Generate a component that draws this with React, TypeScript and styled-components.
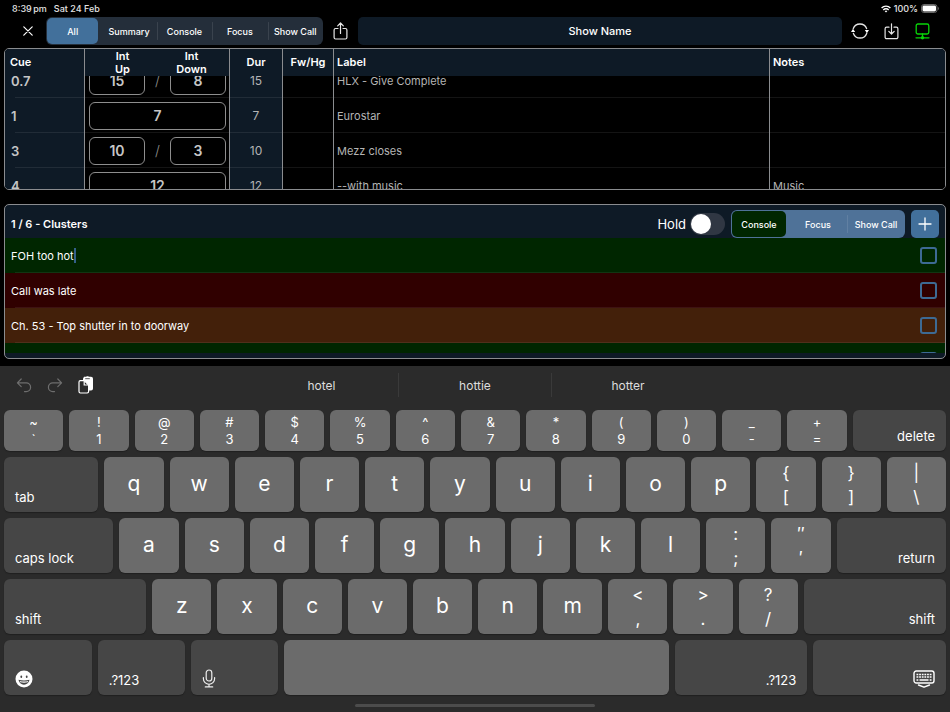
import React, { useLayoutEffect, useRef, useState } from "react";
import styled, { createGlobalStyle, css } from "styled-components";

const navy = "#0e1a26";
const blue = "#42709b";
const line = "#8a8c8f";

const GlobalStyle = createGlobalStyle`
  * { box-sizing: border-box; }
  body {
    margin: 0;
    background: #000;
    color: #fff;
    font-family: Inter, "Liberation Sans", sans-serif;
    font-size: 11px;
  }
  button, input { font: inherit; color: inherit; margin: 0; padding: 0; border: 0; background: none; }
  svg { display: block; flex: none; }
`;

const Page = styled.div`
  min-height: 100vh;
  display: flex;
  flex-direction: column;
  overflow: hidden;
`;

const StatusBar = styled.header`
  display: flex;
  align-items: center;
  height: 17px;
  padding: 0 11px 0 12px;
  gap: 7px;
  font-size: 9px;
  font-weight: 500;
  color: #e4e4e4;
`;

const StatusRight = styled.div`
  margin-left: auto;
  display: flex;
  align-items: center;
  gap: 3px;
`;

const Toolbar = styled.nav`
  display: flex;
  align-items: center;
  height: 28px;
  padding: 0 17px;
`;

const IconButton = styled.button`
  width: 22px;
  height: 28px;
  display: grid;
  place-items: center;
  flex: none;
`;

const ToolGroup = styled.div`
  display: flex;
  gap: 9px;
`;

const Segments = styled.div<{ $tone: "dark" | "light" }>`
  display: grid;
  grid-auto-flow: column;
  grid-auto-columns: 1fr;
  flex: none;
  height: 28px;
  padding: 1px 0;
  border-radius: 6px;
  ${(p) =>
    p.$tone === "dark"
      ? css`
          width: 277px;
          margin: 0 6px 0 7px;
          background: #242e3a;
        `
      : css`
          width: 174px;
          background: #4f7298;
        `}
`;

const Segment = styled.button<{ $on: boolean; $fill: string; $rule: boolean }>`
  border-radius: 5px;
  font-size: 9px;
  font-weight: 500;
  white-space: nowrap;
  background-color: ${(p) => (p.$on ? p.$fill : "transparent")};
  ${(p) => p.$on && css`margin: 0 3px 0 1px;`}
  ${(p) =>
    p.$rule &&
    css`
      background-image: linear-gradient(rgba(255, 255, 255, 0.1), rgba(255, 255, 255, 0.1));
      background-size: 1px 18px;
      background-repeat: no-repeat;
      background-position: left center;
    `}
`;

const ShowName = styled.input`
  flex: 1;
  min-width: 0;
  height: 28px;
  margin: 0 7px;
  border-radius: 5px;
  background: ${navy};
  text-align: center;
  font-weight: 500;
`;

const Panel = styled.section`
  margin: 3px 4px 0;
  border: 1px solid ${line};
  border-radius: 5px;
  overflow: hidden;
`;

const CueScroll = styled.div`
  height: 140px;
  overflow-y: auto;
  scrollbar-width: none;
`;

const CueTable = styled.table`
  width: 100%;
  table-layout: fixed;
  border-collapse: separate;
  border-spacing: 0;
  thead { position: sticky; top: 0; z-index: 1; }
`;

const Col = styled.col<{ $w?: number }>`
  width: ${(p) => (p.$w ? `${p.$w}px` : "auto")};
`;

const Head = styled.th<{ $align?: string }>`
  height: 27px;
  padding: 0 3px;
  background: ${navy};
  border-right: 1px solid ${line};
  text-align: ${(p) => p.$align ?? "left"};
  line-height: 13px;
  font-weight: 600;
  &:first-child { padding-left: 5px; }
  &:last-child { border-right: 0; }
`;

const IntHead = styled.div`
  display: grid;
  grid-template-columns: 1fr 1fr;
  text-align: center;
`;

const Cell = styled.td<{ $kind?: "cue" | "dur" }>`
  height: 35px;
  padding: 0 3px;
  border-right: 1px solid ${line};
  color: #b4b4b4;
  background-color: ${(p) => (p.$kind ? navy : "#000")};
  background-image: linear-gradient(rgba(255, 255, 255, 0.08), rgba(255, 255, 255, 0.08));
  background-repeat: no-repeat;
  background-position: right bottom;
  background-size: ${(p) => (p.$kind === "cue" ? "calc(100% - 10px)" : "100%")} 1px;
  ${(p) => p.$kind === "cue" && css`padding-left: 6px; font-size: 13px; font-weight: 600; color: #c6c6c6;`}
  ${(p) => p.$kind === "dur" && css`text-align: center; font-size: 12px;`}
  &:last-child { border-right: 0; }
`;

const Times = styled.div`
  display: flex;
  align-items: center;
  justify-content: space-between;
  padding-left: 1px;
  font-size: 14px;
`;

const Slash = styled.span`
  font-weight: 300;
  color: #909090;
`;

const TimeInput = styled.input<{ $full?: boolean }>`
  width: ${(p) => (p.$full ? "100%" : "56px")};
  height: 28px;
  border: 1px solid #8e8e8e;
  border-radius: 6px;
  text-align: center;
  font-weight: 600;
  color: #c6c6c6;
`;

const NotesPanel = styled(Panel)`
  margin-top: 14px;
  padding-bottom: 5px;
  background: ${navy};
`;

const NotesHead = styled.div`
  display: flex;
  align-items: flex-end;
  height: 33px;
  padding: 0 6px;
`;

const NotesTitle = styled.h2`
  flex: 1;
  margin: 0;
  font-size: 11px;
  line-height: 27px;
  font-weight: 600;
`;

const Hold = styled.label`
  display: flex;
  align-items: center;
  gap: 4px;
  height: 28px;
  margin-right: 6px;
  font-size: 13px;
`;

const Switch = styled.input`
  appearance: none;
  width: 35px;
  height: 22px;
  border-radius: 11px;
  background: #303743;
  padding: 1px;
  &::before {
    content: "";
    display: block;
    width: 20px;
    height: 20px;
    border-radius: 50%;
    background: #fff;
  }
  &:checked { background: ${blue}; }
  &:checked::before { margin-left: auto; }
`;

const AddButton = styled.button`
  width: 28px;
  height: 28px;
  margin-left: 6px;
  border-radius: 5px;
  background: ${blue};
  display: grid;
  place-items: center;
`;

const NotesList = styled.ul`
  list-style: none;
  margin: 0;
  padding: 0;
  height: 115px;
  overflow-y: auto;
  scrollbar-width: none;
`;

const Note = styled.li<{ $bg: string }>`
  display: flex;
  align-items: center;
  height: 35px;
  padding: 0 8px 0 6px;
  background: ${(p) => p.$bg} linear-gradient(rgba(255,255,255,.07), rgba(255,255,255,.07)) right bottom no-repeat;
  background-size: calc(100% - 10px) 1px;
`;

const NoteInput = styled.input`
  field-sizing: content;
  caret-color: transparent;
  outline: none;
`;

const Caret = styled.span`
  width: 2px;
  height: 15px;
  background: #34608a;
`;

const Tick = styled.input`
  appearance: none;
  width: 17px;
  height: 17px;
  margin-left: auto;
  border: 2px solid #3d6a94;
  border-radius: 3px;
  &:checked { background: ${blue}; }
`;

const Keyboard = styled.section`
  flex: 1;
  display: flex;
  flex-direction: column;
  gap: 6px;
  margin-top: 7px;
  padding: 0 4px 5px;
  background: #2b2b2b;
`;

const Suggestions = styled.div`
  display: flex;
  align-items: center;
  height: 38px;
  padding-left: 9px;
`;

const EditTools = styled.div`
  display: flex;
  gap: 9px;
  width: 232px;
`;

const Words = styled.div`
  flex: 1;
  display: grid;
  grid-template-columns: repeat(3, 1fr);
  padding-right: 242px;
`;

const Word = styled.button`
  height: 24px;
  font-size: 12px;
  color: #ddd;
  & + & { border-left: 1px solid #3a3a3a; }
`;

const KeyRow = styled.div<{ $h: number }>`
  display: flex;
  gap: 6px;
  height: ${(p) => p.$h}px;
`;

const KeyButton = styled.button<{ $w: number; $tone: "char" | "mod"; $align: string }>`
  flex: ${(p) => `${p.$w} 1 ${p.$w}px`};
  min-width: 0;
  display: flex;
  flex-direction: column;
  border-radius: 6px;
  box-shadow: 0 1px 1px #202020;
  background: ${(p) => (p.$tone === "char" ? "#6b6b6b" : "#464646")};
  font-size: ${(p) => (p.$tone === "char" ? 21 : 13)}px;
  ${(p) =>
    p.$tone === "char"
      ? css`align-items: center; justify-content: center; padding-bottom: 3px;`
      : css`align-items: ${p.$align}; justify-content: flex-end; padding: 0 11px 7px;`}
`;

const Pair = styled.span<{ $compact: boolean }>`
  display: flex;
  flex-direction: column;
  align-items: center;
  font-size: ${(p) => (p.$compact ? 13 : 17)}px;
  line-height: ${(p) => (p.$compact ? 17 : 24)}px;
  margin-bottom: -3px;
`;

const HomeBar = styled.div`
  width: 240px;
  height: 3px;
  margin: auto auto 0;
  border-radius: 2px;
  background: #4c4c4c;
`;

const stroke = (color = "#fff", width = 1.4) => ({
  fill: "none",
  stroke: color,
  strokeWidth: width,
  strokeLinecap: "round" as const,
  strokeLinejoin: "round" as const,
});

const WifiIcon = () => (
  <svg width="10" height="8" viewBox="0 0 10 8">
    <g fill="none" stroke="#fff" strokeWidth="1.4">
      <path d="M.6 3A6.2 6.2 0 0 1 9.4 3" />
      <path d="M2.3 4.9a3.8 3.8 0 0 1 5.4 0" />
    </g>
    <path d="M3.7 6.2a1.8 1.8 0 0 1 2.6 0L5 7.6z" fill="#fff" />
  </svg>
);

const BatteryIcon = () => (
  <svg width="18" height="9" viewBox="0 0 18 9">
    <rect x=".5" y=".5" width="15.5" height="8" rx="2.4" fill="none" stroke="#666" />
    <rect x="1.5" y="1.5" width="13.5" height="6" rx="1.4" fill="#fff" />
    <path d="M17 3v3c1-.4 1-2.6 0-3z" fill="#777" />
  </svg>
);

const CloseIcon = () => (
  <svg width="10" height="10" viewBox="0 0 10 10" {...stroke("#fff", 1.2)}>
    <path d="M.8.8l8.4 8.4M9.2.8L.8 9.2" />
  </svg>
);

const ShareIcon = () => (
  <svg width="15" height="18" viewBox="0 0 15 18" {...stroke("#e8e8e8", 1.2)}>
    <path d="M5 6.5H2.6a1.5 1.5 0 0 0-1.500 1.5v7.5A1.5 1.5 0 0 0 2.6 17h9.800a1.5 1.5 0 0 0 1.500-1.500V8a1.5 1.5 0 0 0-1.500-1.500H10M7.500 11.500V1.200M4.700 3.800l2.800-2.800 2.800 2.800" />
  </svg>
);

const SyncIcon = () => (
  <svg width="18" height="16" viewBox="0 0 18 16">
    <g {...stroke("#e8e8e8", 1.3)}>
      <path d="M2.300 5.600A7.100 7.100 0 0 1 15.600 5.600" />
      <path d="M15.700 10.400A7.100 7.100 0 0 1 2.400 10.400" />
    </g>
    <path d="M0 9L2 5.800 4.200 9zM13.800 7H18l-2.100 3.200z" fill="#fff" />
  </svg>
);

const DownloadIcon = () => (
  <svg width="15" height="17" viewBox="0 0 15 17" {...stroke("#e8e8e8", 1.2)}>
    <path d="M5 4.200H2.600a1.500 1.500 0 0 0-1.500 1.500v8.500a1.500 1.500 0 0 0 1.500 1.500h9.800a1.500 1.500 0 0 0 1.500-1.500V5.700a1.500 1.500 0 0 0-1.500-1.500H10M7.500 .8v10M4.800 8.300l2.700 2.700 2.700-2.700" />
  </svg>
);

const NetworkIcon = () => (
  <svg width="15" height="17" viewBox="0 0 15 17">
    <g {...stroke("#08d408", 1.3)}>
      <rect x="1.2" y="1" width="12.600" height="10" rx="1.700" />
      <path d="M7.500 11v3.500M1 14.800h13" />
    </g>
    <circle cx="7.500" cy="14.800" r="1.700" fill="#08d408" />
  </svg>
);

const PlusIcon = () => (
  <svg width="14" height="14" viewBox="0 0 14 14" {...stroke("#fff", 1.3)}>
    <path d="M7 1v12M1 7h12" />
  </svg>
);

const TurnIcon = ({ redo = false }: { redo?: boolean }) => (
  <svg width="16" height="15" viewBox="0 0 16 15" {...stroke("#6e6e6e", 1.2)}>
    {redo ? (
      <path d="M10.800 1l3.800 3.800-3.800 3.800M14.400 4.800H5.800a4.400 4.400 0 0 0 0 8.800h1.700" />
    ) : (
      <path d="M5.200 1L1.400 4.800l3.800 3.800M1.600 4.800h8.600a4.400 4.400 0 0 1 0 8.800H8.500" />
    )}
  </svg>
);

const PasteIcon = () => (
  <svg width="16" height="18" viewBox="0 0 16 18">
    <path d="M6 .8h1.800c.4-.9 3-.9 3.400 0h1.800a2 2 0 0 1 2 2v9.700a2 2 0 0 1-2 2H5V2.800z" fill="#fff" />
    <path d="M7.200 2.700h4.600" stroke="#555" strokeWidth="1" />
    <path d="M1 6a1.400 1.400 0 0 1 1.400-1.400h3.800l4.400 4.400v6.600a1.400 1.400 0 0 1-1.400 1.400H2.400A1.400 1.400 0 0 1 1 15.600z" fill="#2b2b2b" stroke="#fff" strokeWidth="1.2" />
    <path d="M6.200 4.800V9h4.200" fill="none" stroke="#fff" strokeWidth="1.2" />
  </svg>
);

const EmojiIcon = () => (
  <svg width="18" height="18" viewBox="0 0 18 18">
    <circle cx="9" cy="9" r="8.500" fill="#fff" />
    <ellipse cx="6.300" cy="6.800" rx=".9" ry="1.200" fill="#464646" />
    <ellipse cx="11.700" cy="6.800" rx=".9" ry="1.200" fill="#464646" />
    <path d="M3.500 9.800c3.500 1 7.500 1 11 0-.4 3-2.700 4.900-5.500 4.900s-5.100-1.900-5.500-4.900z" fill="#464646" />
    <path d="M4.600 11c2.900.7 5.900.7 8.800 0l-.7 1.200c-2.400.6-5 .6-7.400 0z" fill="#fff" />
  </svg>
);

const MicIcon = () => (
  <svg width="14" height="19" viewBox="0 0 14 19" {...stroke("#eee", 1.2)}>
    <rect x="4.200" y="1" width="5.600" height="11" rx="2.800" />
    <path d="M1.400 8.500v1.200a5.600 5.600 0 0 0 11.200 0V8.500M7 15.300v2.600M3.300 17.900h7.400" />
  </svg>
);

const HideKeyboardIcon = () => (
  <svg width="22" height="18" viewBox="0 0 22 18">
    <rect x="1" y="1" width="20" height="12" rx="2.200" {...stroke("#fff", 1.4)} />
    <path d="M3.500 4.500h15M3.500 7h15" stroke="#fff" strokeWidth="1.400" strokeDasharray="1.800 .84" />
    <path d="M3.500 10h1.800M6.500 10h9M16.700 10h1.800" stroke="#fff" strokeWidth="1.400" />
    <path d="M5.500 15l5.500 2.200 5.500-2.200" {...stroke("#fff", 1.4)} />
  </svg>
);

type SegmentedProps = { items: string[]; tone: "dark" | "light"; fill: string; label: string };

const Segmented = ({ items, tone, fill, label }: SegmentedProps) => {
  const [active, setActive] = useState(0);
  return (
    <Segments $tone={tone} role="group" aria-label={label}>
      {items.map((item, i) => (
        <Segment
          key={item}
          type="button"
          $on={i === active}
          $fill={fill}
          $rule={i !== active && i - 1 !== active && i > 0}
          aria-pressed={i === active}
          onClick={() => setActive(i)}
        >
          {item}
        </Segment>
      ))}
    </Segments>
  );
};

type Cue = { id: string; times: string[]; dur: string; label: string; notes?: string };

const cues: Cue[] = [
  { id: "0.7", times: ["15", "8"], dur: "15", label: "HLX - Give Complete" },
  { id: "1", times: ["7"], dur: "7", label: "Eurostar" },
  { id: "3", times: ["10", "3"], dur: "10", label: "Mezz closes" },
  { id: "4", times: ["12"], dur: "12", label: "--with music", notes: "Music" },
];

const notes = [
  { text: "FOH too hot", bg: "#002600", editing: true },
  { text: "Call was late", bg: "#300000" },
  { text: "Ch. 53 - Top shutter in to doorway", bg: "#43200a" },
  { text: "", bg: "#002600" },
];

type KeyDef = {
  name: string;
  upper?: string;
  w?: number;
  end?: boolean;
  mod?: boolean;
  icon?: React.ReactNode;
};

const letters = (s: string): KeyDef[] => s.split("").map((name) => ({ name }));
const pairs = (s: string): KeyDef[] => s.split(" ").map((p) => ({ upper: p[0], name: p[1] }));

const keyRows: KeyDef[][] = [
  [...pairs("~` !1 @2 #3 $4 %5 ^6 &7 *8 (9 )0 _- +="), { name: "delete", w: 93, mod: true, end: true }],
  [{ name: "tab", w: 94, mod: true }, ...letters("qwertyuiop"), ...pairs("{[ }] |\\")],
  [
    { name: "caps lock", w: 109, mod: true },
    ...letters("asdfghjkl"),
    ...pairs(":; ″′"),
    { name: "return", w: 109, mod: true, end: true },
  ],
  [
    { name: "shift", w: 142, mod: true },
    ...letters("zxcvbnm"),
    ...pairs("<, >. ?/"),
    { name: "shift", w: 142, mod: true, end: true },
  ],
  [
    { name: "Emoji", w: 88, mod: true, icon: <EmojiIcon /> },
    { name: ".?123", w: 87, mod: true },
    { name: "Dictate", w: 87, mod: true, icon: <MicIcon /> },
    { name: " ", w: 386 },
    { name: ".?123", w: 133, mod: true, end: true },
    { name: "Hide keyboard", w: 133, mod: true, end: true, icon: <HideKeyboardIcon /> },
  ],
];

const Key = ({ def, compact }: { def: KeyDef; compact: boolean }) => (
  <KeyButton
    type="button"
    $w={def.w ?? 59}
    $tone={def.mod ? "mod" : "char"}
    $align={def.end ? "flex-end" : "flex-start"}
    aria-label={def.icon ? def.name : def.name === " " ? "space" : undefined}
  >
    {def.icon ??
      (def.upper ? (
        <Pair $compact={compact}>
          <span>{def.upper}</span>
          <span>{def.name}</span>
        </Pair>
      ) : (
        def.name
      ))}
  </KeyButton>
);

export default function App() {
  const scroller = useRef<HTMLDivElement>(null);

  useLayoutEffect(() => {
    if (scroller.current) scroller.current.scrollTop = 13;
  }, []);

  return (
    <Page>
      <GlobalStyle />
      <StatusBar>
        <span>8:39{"\u2009"}pm</span>
        <span>Sat 24 Feb</span>
        <StatusRight>
          <WifiIcon />
          <span>100%</span>
          <BatteryIcon />
        </StatusRight>
      </StatusBar>
      <Toolbar>
        <IconButton type="button" aria-label="Close"><CloseIcon /></IconButton>
        <Segmented items={["All", "Summary", "Console", "Focus", "Show Call"]} tone="dark" fill={blue} label="View" />
        <IconButton type="button" aria-label="Share"><ShareIcon /></IconButton>
        <ShowName defaultValue="Show Name" aria-label="Show name" />
        <ToolGroup>
          <IconButton type="button" aria-label="Sync"><SyncIcon /></IconButton>
          <IconButton type="button" aria-label="Import"><DownloadIcon /></IconButton>
          <IconButton type="button" aria-label="Network"><NetworkIcon /></IconButton>
        </ToolGroup>
      </Toolbar>

      <Panel aria-label="Cue list">
        <CueScroll ref={scroller}>
          <CueTable>
            <colgroup>
              <Col $w={80} />
              <Col $w={145} />
              <Col $w={53} />
              <Col $w={51} />
              <Col />
              <Col $w={175} />
            </colgroup>
            <thead>
              <tr>
                <Head>Cue</Head>
                <Head>
                  <IntHead>
                    <span>Int<br />Up</span>
                    <span>Int<br />Down</span>
                  </IntHead>
                </Head>
                <Head $align="center">Dur</Head>
                <Head $align="center">Fw/Hg</Head>
                <Head>Label</Head>
                <Head>Notes</Head>
              </tr>
            </thead>
            <tbody>
              {cues.map((cue) => (
                <tr key={cue.id}>
                  <Cell $kind="cue">{cue.id}</Cell>
                  <Cell>
                    <Times>
                      <TimeInput
                        $full={cue.times.length === 1}
                        defaultValue={cue.times[0]}
                        aria-label={`Cue ${cue.id} up time`}
                      />
                      {cue.times.length > 1 && (
                        <>
                          <Slash>/</Slash>
                          <TimeInput defaultValue={cue.times[1]} aria-label={`Cue ${cue.id} down time`} />
                        </>
                      )}
                    </Times>
                  </Cell>
                  <Cell $kind="dur">{cue.dur}</Cell>
                  <Cell />
                  <Cell>{cue.label}</Cell>
                  <Cell>{cue.notes}</Cell>
                </tr>
              ))}
            </tbody>
          </CueTable>
        </CueScroll>
      </Panel>

      <NotesPanel aria-label="Cue notes">
        <NotesHead>
          <NotesTitle>1 / 6 - Clusters</NotesTitle>
          <Hold>
            Hold
            <Switch type="checkbox" role="switch" />
          </Hold>
          <Segmented items={["Console", "Focus", "Show Call"]} tone="light" fill="#002600" label="Note type" />
          <AddButton type="button" aria-label="Add note"><PlusIcon /></AddButton>
        </NotesHead>
        <NotesList>
          {notes.map((note, i) => (
            <Note key={i} $bg={note.bg}>
              {note.editing ? (
                <>
                  <NoteInput defaultValue={note.text} aria-label="Note text" />
                  <Caret />
                </>
              ) : (
                <span>{note.text}</span>
              )}
              <Tick type="checkbox" aria-label={`Done: ${note.text || "note"}`} />
            </Note>
          ))}
        </NotesList>
      </NotesPanel>

      <Keyboard aria-label="Keyboard">
        <Suggestions>
          <EditTools>
            <IconButton type="button" aria-label="Undo"><TurnIcon /></IconButton>
            <IconButton type="button" aria-label="Redo"><TurnIcon redo /></IconButton>
            <IconButton type="button" aria-label="Paste"><PasteIcon /></IconButton>
          </EditTools>
          <Words>
            <Word type="button">hotel</Word>
            <Word type="button">hottie</Word>
            <Word type="button">hotter</Word>
          </Words>
        </Suggestions>
        {keyRows.map((row, r) => (
          <KeyRow key={r} $h={r === 0 ? 41 : 55}>
            {row.map((def, k) => (
              <Key key={k} def={def} compact={r === 0} />
            ))}
          </KeyRow>
        ))}
        <HomeBar />
      </Keyboard>
    </Page>
  );
}
